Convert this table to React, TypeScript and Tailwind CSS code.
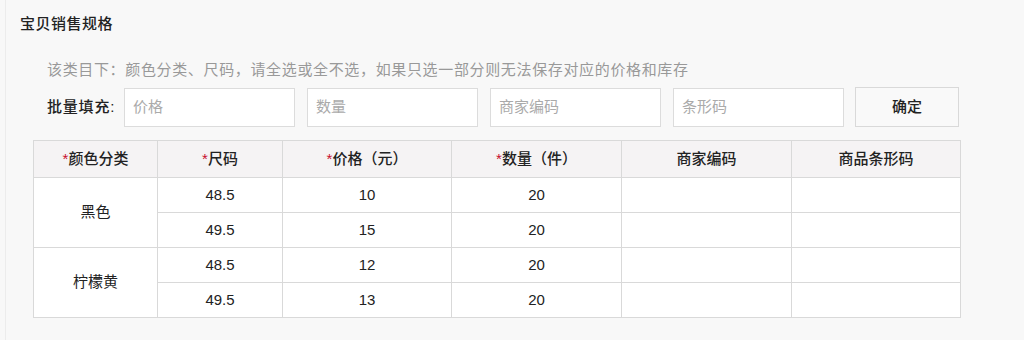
import React from 'react';

const font = { fontFamily: '"Liberation Sans", "Noto Sans CJK SC", sans-serif' };

const fillFields = ['价格', '数量', '商家编码', '条形码'];

const headers = [
  { label: '颜色分类', required: true },
  { label: '尺码', required: true },
  { label: '价格（元）', required: true },
  { label: '数量（件）', required: true },
  { label: '商家编码', required: false },
  { label: '商品条形码', required: false },
];

const groups = [
  {
    color: '黑色',
    rows: [
      { size: '48.5', price: '10', qty: '20' },
      { size: '49.5', price: '15', qty: '20' },
    ],
  },
  {
    color: '柠檬黄',
    rows: [
      { size: '48.5', price: '12', qty: '20' },
      { size: '49.5', price: '13', qty: '20' },
    ],
  },
];

const cell = 'border border-[#d9d9d9] text-center align-middle';

export default function App() {
  return (
    <div className="w-[1024px] h-[340px] bg-[#f8f8f8] pl-[5px] text-[#333]" style={font}>
      <div className="h-full border-l border-[#ececec] pl-[14px]">
        {/* Title */}
        <div className="pt-[14px] text-[15px] leading-[20px] font-medium tracking-[0.5px] text-[#222]">宝贝销售规格</div>

        <div className="pl-[27px]">
          {/* Hint */}
          <div className="mt-[26px] text-[15px] leading-[20px] tracking-[0.65px] text-[#999]">
            该类目下：颜色分类、尺码，请全选或全不选，如果只选一部分则无法保存对应的价格和库存
          </div>

          {/* Batch fill */}
          <div className="mt-[7px] flex items-center">
            <span className="w-[77px] text-[15px] font-medium tracking-[0.8px] text-[#222]">批量填充:</span>
            <div className="flex gap-[12px]">
              {fillFields.map((f) => (
                <div
                  key={f}
                  className="w-[171px] h-[39px] bg-white border border-[#dcdcdc] flex items-center pl-[8px] text-[15px] text-[#aaa]"
                >
                  {f}
                </div>
              ))}
            </div>
            <button className="ml-[11px] w-[104px] h-[40px] bg-[#f9f9f9] border border-[#d9d9d9] text-[15px] font-medium text-[#222]">
              确定
            </button>
          </div>
        </div>

        {/* Table */}
        <table className="mt-[13px] ml-[13px] table-fixed border-collapse text-[15px]">
          <colgroup>
            <col className="w-[124px]" />
            <col className="w-[125px]" />
            <col className="w-[169px]" />
            <col className="w-[170px]" />
            <col className="w-[170px]" />
            <col className="w-[169px]" />
          </colgroup>
          <thead>
            <tr className="h-[37px] bg-[#f5f3f4]">
              {headers.map((h) => (
                <th key={h.label} className={`${cell} font-medium text-[#222]`}>
                  {h.required && <span className="text-[#c8102e]">*</span>}
                  {h.label}
                </th>
              ))}
            </tr>
          </thead>
          <tbody className="bg-white text-[#222]">
            {groups.map((g) =>
              g.rows.map((r, i) => (
                <tr key={g.color + i} className="h-[35px]">
                  {i === 0 && (
                    <td rowSpan={g.rows.length} className={cell}>
                      {g.color}
                    </td>
                  )}
                  <td className={cell}>{r.size}</td>
                  <td className={cell}>{r.price}</td>
                  <td className={cell}>{r.qty}</td>
                  <td className={cell}></td>
                  <td className={cell}></td>
                </tr>
              ))
            )}
          </tbody>
        </table>
      </div>
    </div>
  );
}
